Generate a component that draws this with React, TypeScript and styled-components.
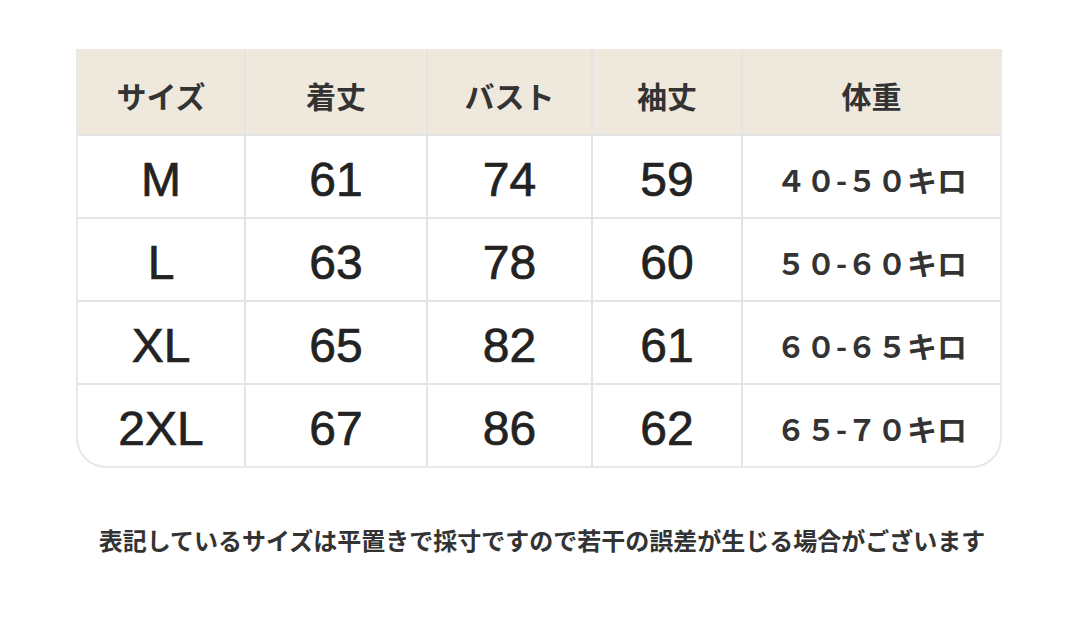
import React from "react";
import styled, { createGlobalStyle } from "styled-components";

const GlobalStyle = createGlobalStyle`
  body {
    margin: 0;
    background: #ffffff;
  }
`;

const headers = ["サイズ", "着丈", "バスト", "袖丈", "体重"];

const rows = [
  { size: "M", length: "61", bust: "74", sleeve: "59", weight: "４０-５０キロ" },
  { size: "L", length: "63", bust: "78", sleeve: "60", weight: "５０-６０キロ" },
  { size: "XL", length: "65", bust: "82", sleeve: "61", weight: "６０-６５キロ" },
  { size: "2XL", length: "67", bust: "86", sleeve: "62", weight: "６５-７０キロ" },
];

const App = () => {
  return (
    <Page>
      <GlobalStyle />
      <Table>
        {headers.map((h) => (
          <HeadCell key={h}>{h}</HeadCell>
        ))}
        {rows.map((r) => (
          <React.Fragment key={r.size}>
            <Cell>{r.size}</Cell>
            <Cell>{r.length}</Cell>
            <Cell>{r.bust}</Cell>
            <Cell>{r.sleeve}</Cell>
            <WeightCell>{r.weight}</WeightCell>
          </React.Fragment>
        ))}
      </Table>
      <Note>表記しているサイズは平置きで採寸ですので若干の誤差が生じる場合がございます</Note>
    </Page>
  );
};

export default App;

const Page = styled.div`
  width: 1080px;
  height: 622px;
  padding-top: 49px;
  box-sizing: border-box;
  display: flex;
  flex-direction: column;
  align-items: center;
`;

const Table = styled.div`
  width: 926px;
  margin-left: -2px;
  box-sizing: border-box;
  display: grid;
  grid-template-columns: 166px 180px 163px 148px 1fr;
  grid-template-rows: 85px repeat(4, 81px);
  gap: 2px;
  background: #e4e4e4;
  border: 2px solid #e8e8e8;
  border-top: none;
  border-radius: 0 0 30px 30px;
  overflow: hidden;
`;

const HeadCell = styled.div`
  background: #efe8dc;
  display: flex;
  align-items: center;
  justify-content: center;
  padding-top: 6px;
  box-sizing: border-box;
  font-family: "Noto Sans CJK JP", sans-serif;
  font-weight: 700;
  font-size: 30px;
  color: #333333;
`;

const Cell = styled.div`
  background: #ffffff;
  display: flex;
  align-items: center;
  justify-content: center;
  padding-top: 6px;
  box-sizing: border-box;
  font-family: "Liberation Sans", Arial, sans-serif;
  font-size: 48px;
  color: #222222;
  -webkit-text-stroke: 0.7px #222222;
`;

const WeightCell = styled(Cell)`
  font-family: "Noto Sans CJK JP", sans-serif;
  font-weight: 700;
  font-size: 30px;
  color: #333333;
  -webkit-text-stroke: 0;
  padding-top: 4px;
`;

const Note = styled.div`
  margin-top: 54px;
  margin-left: 4px;
  font-family: "Noto Sans CJK JP", sans-serif;
  font-weight: 700;
  font-size: 24px;
  color: #333333;
`;
